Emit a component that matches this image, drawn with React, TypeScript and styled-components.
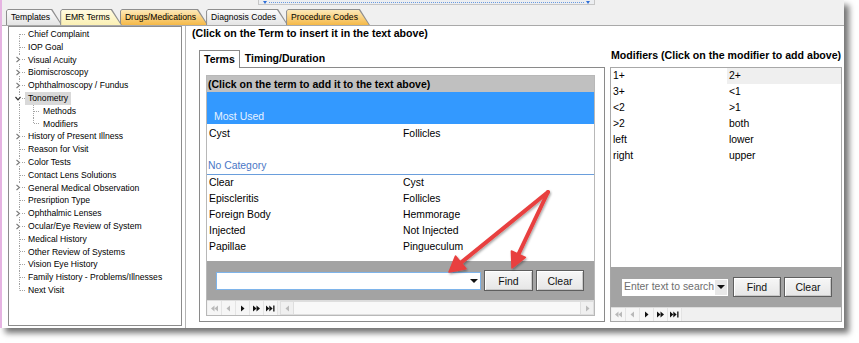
import React from 'react';
import styled, { createGlobalStyle } from 'styled-components';

const GlobalStyle = createGlobalStyle`
  html, body {
    margin: 0;
    padding: 0;
    background: #fff;
  }
  body {
    font-family: "Liberation Sans", Arial, sans-serif;
    color: #000;
  }
`;

const Page = styled.div`
  width: 859px;
  height: 343px;
  position: relative;
  background: #fff;
  overflow: hidden;
`;

const Frame = styled.div`
  width: 844px;
  height: 328px;
  box-sizing: border-box;
  border-left: 2px solid #e6b4e2;
  background: #fff;
  display: flex;
  flex-direction: column;
  box-shadow: 5px 5px 6px rgba(0, 0, 0, 0.55);
`;

/* ---------- top strip + main tabs ---------- */

const TopBar = styled.div`
  flex: none;
  height: 26px;
  box-sizing: border-box;
  background: #f0f0f0;
  border-bottom: 1px solid #a9a9a9;
  display: flex;
  flex-direction: column;
`;

const StripRow = styled.div`
  height: 9px;
  padding-left: 256px;
  display: flex;
  align-items: flex-start;
`;

const SplitterHandle = styled.div`
  width: 337px;
  height: 5px;
  box-sizing: border-box;
  background: #eceef1;
  border: 1px solid #c6c6c6;
  border-top: none;
  display: flex;
  align-items: center;
  gap: 2px;
  padding: 0 4px;
`;

const Dotted = styled.div`
  flex: 1;
  border-top: 1px dotted #6a9ae0;
`;

const Caret = styled.div`
  width: 0;
  height: 0;
  border-left: 2px solid transparent;
  border-right: 2px solid transparent;
  border-top: 3px solid #2f6fd8;
`;

const TabRow = styled.div`
  height: 16px;
  padding-left: 4px;
  display: flex;
  align-items: flex-end;
`;

const TabShape = styled.div<{ $first?: boolean; $sel?: boolean }>`
  height: 16px;
  box-sizing: border-box;
  margin-left: ${(p) => (p.$first ? 0 : -2)}px;
  padding: 1px 1px 0 1px;
  background: #8e8e8e;
  clip-path: polygon(0 100%, 0 2px, 2px 0, calc(100% - 10px) 0, 100% 100%);
  position: relative;
  z-index: ${(p) => (p.$sel ? 2 : 1)};
`;

const tabFills = {
  gray: 'linear-gradient(#fcfcfc, #e4e4e4)',
  yellow: 'linear-gradient(#fffbe0, #fbf0b4)',
  orange: 'linear-gradient(#fde9b8, #f5b948)',
};

const TabFace = styled.div<{ $tone: keyof typeof tabFills }>`
  height: 100%;
  box-sizing: border-box;
  padding: 0 11px 0 4px;
  background: ${(p) => tabFills[p.$tone]};
  clip-path: polygon(0 100%, 0 1px, 1px 0, calc(100% - 10px) 0, 100% 100%);
  font-size: 8.6px;
  line-height: 15px;
  white-space: nowrap;
  color: #000;
`;

/* ---------- body ---------- */

const Body = styled.div`
  flex: 1;
  min-height: 0;
  display: flex;
`;

const LeftPane = styled.div`
  flex: none;
  width: 183px;
  box-sizing: border-box;
  padding-left: 6px;
`;

const TreeBox = styled.div`
  width: 174px;
  height: 300px;
  box-sizing: border-box;
  border: 1px solid #8c8c8c;
  padding-top: 1px;
  background: #fff;
  display: flex;
  flex-direction: column;
`;

const TreeRow = styled.div`
  height: 12.8px;
  display: flex;
  align-items: center;
  font-size: 8.6px;
  line-height: 12.8px;
  color: #000;
  white-space: nowrap;
`;

type VLine = 'full' | 'top' | 'bottom';

const Branch = styled.span<{ $v: VLine; $w: number; $x: number; $hz?: boolean }>`
  flex: none;
  width: ${(p) => p.$w}px;
  height: 100%;
  display: flex;
  align-items: center;
  background-image: repeating-linear-gradient(to bottom, #a3a3a3 0 1px, transparent 1px 2px)
    ${(p) => (p.$hz ? ', repeating-linear-gradient(to right, #a3a3a3 0 1px, transparent 1px 2px)' : '')};
  background-repeat: no-repeat;
  background-size: 1px ${(p) => (p.$v === 'full' ? '100%' : '50%')}
    ${(p) => (p.$hz ? `, ${p.$w - p.$x - 1}px 1px` : '')};
  background-position: ${(p) => p.$x}px ${(p) => (p.$v === 'bottom' ? '100%' : '0')}
    ${(p) => (p.$hz ? `, ${p.$x + 1}px 50%` : '')};
`;

const Expander = styled.svg`
  margin-left: 6px;
  width: 6px;
  height: 7px;
  background: #fff;
`;

const TreeLabel = styled.span<{ $sel?: boolean }>`
  padding: 0 3px;
  background: ${(p) => (p.$sel ? '#d9d9d9' : 'transparent')};
`;

/* ---------- middle ---------- */

const MiddlePane = styled.div`
  flex: none;
  width: 420px;
  box-sizing: border-box;
  border-left: 1px solid #b4b4b4;
  display: flex;
  flex-direction: column;
`;

const PaneTitle = styled.div`
  height: 14px;
  line-height: 14px;
  font-size: 10.6px;
  font-weight: bold;
  white-space: nowrap;
`;

const MiddleTitle = styled(PaneTitle)`
  padding-left: 6px;
`;

const SubTabRow = styled.div`
  margin: 10px 0 0 13px;
  height: 17px;
  display: flex;
  align-items: flex-end;
`;

const SubTab = styled.div<{ $sel?: boolean }>`
  height: 18px;
  box-sizing: border-box;
  margin-bottom: ${(p) => (p.$sel ? -1 : 0)}px;
  padding: 0 4px;
  font-size: 10.5px;
  font-weight: bold;
  line-height: 17px;
  background: ${(p) => (p.$sel ? '#fff' : 'transparent')};
  border: 1px solid ${(p) => (p.$sel ? '#8a8a8a' : 'transparent')};
  border-bottom: none;
  position: relative;
  z-index: 1;
`;

const TabBox = styled.div`
  margin-left: 13px;
  width: 406px;
  height: 255px;
  box-sizing: border-box;
  border: 1px solid #8a8a8a;
  padding: 7px 9px 5px 6px;
`;

const InnerList = styled.div`
  height: 241px;
  box-sizing: border-box;
  border: 1px solid #b8b8b8;
  display: flex;
  flex-direction: column;
`;

const GridHeader = styled.div`
  flex: none;
  height: 16px;
  line-height: 16px;
  padding-left: 1px;
  background: #c0c0c0;
  font-size: 10.5px;
  font-weight: bold;
  white-space: nowrap;
`;

const GroupBand = styled.div`
  flex: none;
  height: 32px;
  box-sizing: border-box;
  background: #3399ff;
  display: flex;
  align-items: flex-end;
  padding: 0 0 1px 7px;
  color: #e6f2ff;
  font-size: 10.5px;
  line-height: 14px;
`;

const ListBody = styled.div`
  flex: 1;
  min-height: 0;
  padding-top: 2px;
  background: #fff;
  display: flex;
  flex-direction: column;
`;

const TermRow = styled.div<{ $col: number }>`
  height: 16px;
  flex: none;
  display: grid;
  grid-template-columns: ${(p) => p.$col}px 1fr;
  font-size: 10.4px;
  line-height: 16px;
  white-space: nowrap;
`;

const TermCell = styled.span<{ $hot?: boolean }>`
  padding-left: 2px;
  background: ${(p) => (p.$hot ? '#efefef' : 'transparent')};
`;

const CategoryRow = styled.div`
  flex: none;
  height: 16px;
  box-sizing: content-box;
  padding-left: 1px;
  border-bottom: 1px solid #6a9edc;
  color: #4a77c6;
  font-size: 10.4px;
  line-height: 16px;
`;

const Toolbar = styled.div<{ $h: number; $pl: number }>`
  flex: none;
  height: ${(p) => p.$h}px;
  padding-left: ${(p) => p.$pl}px;
  background: #a3a3a3;
  display: flex;
  align-items: center;
`;

const Combo = styled.div<{ $w: number; $h: number; $framed?: boolean }>`
  width: ${(p) => p.$w}px;
  height: ${(p) => p.$h}px;
  box-sizing: border-box;
  background: #fff;
  border: 1px solid ${(p) => (p.$framed ? '#7eb4ea' : '#fff')};
  display: flex;
  align-items: stretch;
`;

const ComboText = styled.span`
  flex: 1;
  padding-left: 1px;
  font-size: 10.4px;
  line-height: 14px;
  color: #6e6e6e;
  white-space: nowrap;
  overflow: hidden;
`;

const ComboDrop = styled.span<{ $shade?: boolean }>`
  width: 12px;
  display: flex;
  align-items: center;
  justify-content: center;
  background: ${(p) => (p.$shade ? '#e8e8e8' : '#fff')};
`;

const DropTriangle = styled.span`
  width: 0;
  height: 0;
  border-left: 4px solid transparent;
  border-right: 4px solid transparent;
  border-top: 4px solid #111;
`;

const ToolButton = styled.button<{ $w: number; $h: number; $ml: number }>`
  width: ${(p) => p.$w}px;
  height: ${(p) => p.$h}px;
  margin-left: ${(p) => p.$ml}px;
  padding: 0;
  box-sizing: border-box;
  border: 1px solid #5e5e5e;
  background: linear-gradient(#f7f7f7, #e6e6e6);
  box-shadow: inset 1px 1px 0 #fff, inset -1px -1px 0 #c9c9c9;
  font-family: "Liberation Sans", Arial, sans-serif;
  font-size: 10.5px;
  color: #111;
`;

const Pager = styled.div<{ $h: number }>`
  flex: none;
  height: ${(p) => p.$h}px;
  box-sizing: border-box;
  padding-left: 1px;
  background: #f0f0f0;
  border-top: 1px solid #dcdcdc;
  display: flex;
  align-items: stretch;
`;

const PagerCell = styled.span`
  width: 13px;
  display: flex;
  align-items: center;
  justify-content: center;
  border-right: 1px solid #e4e4e4;
  background: #f6f6f6;
`;

const ScrollBar = styled.div`
  flex: 1;
  margin-left: 2px;
  display: flex;
  border: 1px solid #dedede;
  background: #f8f8f8;
`;

const ScrollButton = styled.span<{ $end?: boolean }>`
  width: 12px;
  display: flex;
  align-items: center;
  justify-content: center;
  background: #f0f0f0;
  border-${(p) => (p.$end ? 'left' : 'right')}: 1px solid #dedede;
`;

const ScrollTrack = styled.span`
  flex: 1;
`;

/* ---------- right ---------- */

const RightPane = styled.div`
  flex: 1;
  box-sizing: border-box;
  padding: 22px 2px 0 5px;
  display: flex;
  flex-direction: column;
`;

const RightTitle = styled(PaneTitle)`
  padding-left: 1px;
`;

const ModList = styled.div`
  margin-top: 5px;
  width: 232px;
  height: 255px;
  box-sizing: border-box;
  border: 1px solid #a8a8a8;
  display: flex;
  flex-direction: column;
`;

const ModBody = styled.div`
  flex: 1;
  min-height: 0;
  background: #fff;
  display: flex;
  flex-direction: column;
`;

/* ---------- callout arrows ---------- */

const Callout = styled.svg`
  position: absolute;
  left: 0;
  top: 0;
  width: 859px;
  height: 343px;
  pointer-events: none;
`;

type PagerKind = 'first' | 'prev' | 'next' | 'fast' | 'last';

const PagerIcon = ({ kind, off }: { kind: PagerKind; off?: boolean }) => {
  const c = off ? '#b9b9b9' : '#111';
  return (
    <svg width="9" height="7" viewBox="0 0 9 7">
      {kind === 'first' && (
        <>
          <polygon points="4.5,0.5 4.5,6.5 1,3.5" fill={c} />
          <polygon points="8,0.5 8,6.5 4.5,3.5" fill={c} />
        </>
      )}
      {kind === 'prev' && <polygon points="6,0.5 6,6.5 2.5,3.5" fill={c} />}
      {kind === 'next' && <polygon points="3,0.5 3,6.5 6.5,3.5" fill={c} />}
      {kind === 'fast' && (
        <>
          <polygon points="1,0.5 1,6.5 4.5,3.5" fill={c} />
          <polygon points="4.5,0.5 4.5,6.5 8,3.5" fill={c} />
        </>
      )}
      {kind === 'last' && (
        <>
          <polygon points="0,0.5 0,6.5 3.3,3.5" fill={c} />
          <polygon points="3.3,0.5 3.3,6.5 6.6,3.5" fill={c} />
          <rect x="7.2" y="0.5" width="1.3" height="6" fill={c} />
        </>
      )}
    </svg>
  );
};

const PagerButtons = () => (
  <>
    <PagerCell><PagerIcon kind="first" off /></PagerCell>
    <PagerCell><PagerIcon kind="prev" off /></PagerCell>
    <PagerCell><PagerIcon kind="next" /></PagerCell>
    <PagerCell><PagerIcon kind="fast" /></PagerCell>
    <PagerCell><PagerIcon kind="last" /></PagerCell>
  </>
);

type TreeItem = {
  label: string;
  exp?: 'open' | 'closed';
  child?: boolean;
  v?: VLine;
  childV?: VLine;
  sel?: boolean;
};

const tree: TreeItem[] = [
  { label: 'Chief Complaint', v: 'bottom' },
  { label: 'IOP Goal' },
  { label: 'Visual Acuity', exp: 'closed' },
  { label: 'Biomiscroscopy', exp: 'closed' },
  { label: 'Ophthalmoscopy / Fundus', exp: 'closed' },
  { label: 'Tonometry', exp: 'open', sel: true },
  { label: 'Methods', child: true, childV: 'full' },
  { label: 'Modifiers', child: true, childV: 'top' },
  { label: 'History of Present Illness', exp: 'closed' },
  { label: 'Reason for Visit' },
  { label: 'Color Tests', exp: 'closed' },
  { label: 'Contact Lens Solutions' },
  { label: 'General Medical Observation', exp: 'closed' },
  { label: 'Presription Type' },
  { label: 'Ophthalmic Lenses', exp: 'closed' },
  { label: 'Ocular/Eye Review of System', exp: 'closed' },
  { label: 'Medical History' },
  { label: 'Other Review of Systems' },
  { label: 'Vision Eye History' },
  { label: 'Family History - Problems/Illnesses' },
  { label: 'Next Visit', v: 'top' },
];

const mostUsed: [string, string][] = [['Cyst', 'Follicles']];

const noCategory: [string, string][] = [
  ['Clear', 'Cyst'],
  ['Episcleritis', 'Follicles'],
  ['Foreign Body', 'Hemmorage'],
  ['Injected', 'Not Injected'],
  ['Papillae', 'Pingueculum'],
];

const modifiers: [string, string][] = [
  ['1+', '2+'],
  ['3+', '<1'],
  ['<2', '>1'],
  ['>2', 'both'],
  ['left', 'lower'],
  ['right', 'upper'],
];

const mainTabs: { label: string; tone: keyof typeof tabFills; sel?: boolean }[] = [
  { label: 'Templates', tone: 'gray' },
  { label: 'EMR Terms', tone: 'yellow', sel: true },
  { label: 'Drugs/Medications', tone: 'orange' },
  { label: 'Diagnosis Codes', tone: 'gray' },
  { label: 'Procedure Codes', tone: 'orange' },
];

const TreeNode = ({ item }: { item: TreeItem }) => (
  <TreeRow>
    {item.child ? (
      <>
        <Branch $v="full" $w={16} $x={10} />
        <Branch $v={item.childV || 'full'} $w={15} $x={8} $hz />
      </>
    ) : (
      <Branch $v={item.v || 'full'} $w={16} $x={10} $hz>
        {item.exp && (
          <Expander viewBox="0 0 6 7">
            {item.exp === 'closed' ? (
              <polyline points="1.5,1 4.5,3.5 1.5,6" fill="none" stroke="#7a7a7a" strokeWidth="1.1" />
            ) : (
              <polyline points="0.5,2 3,4.8 5.5,2" fill="none" stroke="#333" strokeWidth="1.2" />
            )}
          </Expander>
        )}
      </Branch>
    )}
    <TreeLabel $sel={item.sel}>{item.label}</TreeLabel>
  </TreeRow>
);

export default function App() {
  return (
    <Page>
      <GlobalStyle />
      <Frame>
        <TopBar>
          <StripRow>
            <SplitterHandle>
              <Caret />
              <Dotted />
              <Caret />
            </SplitterHandle>
          </StripRow>
          <TabRow>
            {mainTabs.map((t, i) => (
              <TabShape key={t.label} $first={i === 0} $sel={t.sel}>
                <TabFace $tone={t.tone}>{t.label}</TabFace>
              </TabShape>
            ))}
          </TabRow>
        </TopBar>

        <Body>
          <LeftPane>
            <TreeBox>
              {tree.map((item) => (
                <TreeNode key={item.label} item={item} />
              ))}
            </TreeBox>
          </LeftPane>

          <MiddlePane>
            <MiddleTitle>(Click on the Term to insert it in the text above)</MiddleTitle>
            <SubTabRow>
              <SubTab $sel>Terms</SubTab>
              <SubTab>Timing/Duration</SubTab>
            </SubTabRow>
            <TabBox>
              <InnerList>
                <GridHeader>(Click on the term to add it to the text above)</GridHeader>
                <GroupBand>Most Used</GroupBand>
                <ListBody>
                  {mostUsed.map(([a, b]) => (
                    <TermRow key={a} $col={194}>
                      <TermCell>{a}</TermCell>
                      <TermCell>{b}</TermCell>
                    </TermRow>
                  ))}
                  <TermRow $col={194} />
                  <CategoryRow>No Category</CategoryRow>
                  {noCategory.map(([a, b]) => (
                    <TermRow key={a} $col={194}>
                      <TermCell>{a}</TermCell>
                      <TermCell>{b}</TermCell>
                    </TermRow>
                  ))}
                </ListBody>
                <Toolbar $h={39} $pl={9}>
                  <Combo $w={265} $h={18} $framed>
                    <ComboText />
                    <ComboDrop>
                      <DropTriangle />
                    </ComboDrop>
                  </Combo>
                  <ToolButton $w={49} $h={21} $ml={3}>Find</ToolButton>
                  <ToolButton $w={48} $h={21} $ml={3}>Clear</ToolButton>
                </Toolbar>
                <Pager $h={15}>
                  <PagerButtons />
                  <ScrollBar>
                    <ScrollButton>
                      <PagerIcon kind="prev" off />
                    </ScrollButton>
                    <ScrollTrack />
                    <ScrollButton $end>
                      <PagerIcon kind="next" off />
                    </ScrollButton>
                  </ScrollBar>
                </Pager>
              </InnerList>
            </TabBox>
          </MiddlePane>

          <RightPane>
            <RightTitle>Modifiers (Click on the modifier to add above)</RightTitle>
            <ModList>
              <ModBody>
                {modifiers.map(([a, b]) => (
                  <TermRow key={a} $col={116}>
                    <TermCell>{a}</TermCell>
                    <TermCell $hot={b === '2+'}>{b}</TermCell>
                  </TermRow>
                ))}
              </ModBody>
              <Toolbar $h={40} $pl={11}>
                <Combo $w={106} $h={17}>
                  <ComboText>Enter text to search</ComboText>
                  <ComboDrop $shade>
                    <DropTriangle />
                  </ComboDrop>
                </Combo>
                <ToolButton $w={48} $h={20} $ml={5}>Find</ToolButton>
                <ToolButton $w={48} $h={20} $ml={3}>Clear</ToolButton>
              </Toolbar>
              <Pager $h={14}>
                <PagerButtons />
              </Pager>
            </ModList>
          </RightPane>
        </Body>
      </Frame>

      <Callout viewBox="0 0 859 343">
        <defs>
          <filter id="arrowShadow" x="-20%" y="-20%" width="140%" height="140%">
            <feDropShadow dx="1" dy="1.5" stdDeviation="1.2" floodColor="#000" floodOpacity="0.35" />
          </filter>
        </defs>
        <g filter="url(#arrowShadow)" fill="#e8403f" stroke="#e8403f" strokeLinecap="round" strokeLinejoin="round">
          <line x1="548" y1="192" x2="461" y2="262.6" strokeWidth="4" />
          <polygon points="449,272 466,268.8 455.5,256" strokeWidth="1.5" />
          <line x1="548" y1="192" x2="518.4" y2="254.4" strokeWidth="4" />
          <polygon points="512,268 525.4,257.4 511.4,251" strokeWidth="1.5" />
        </g>
      </Callout>
    </Page>
  );
}
